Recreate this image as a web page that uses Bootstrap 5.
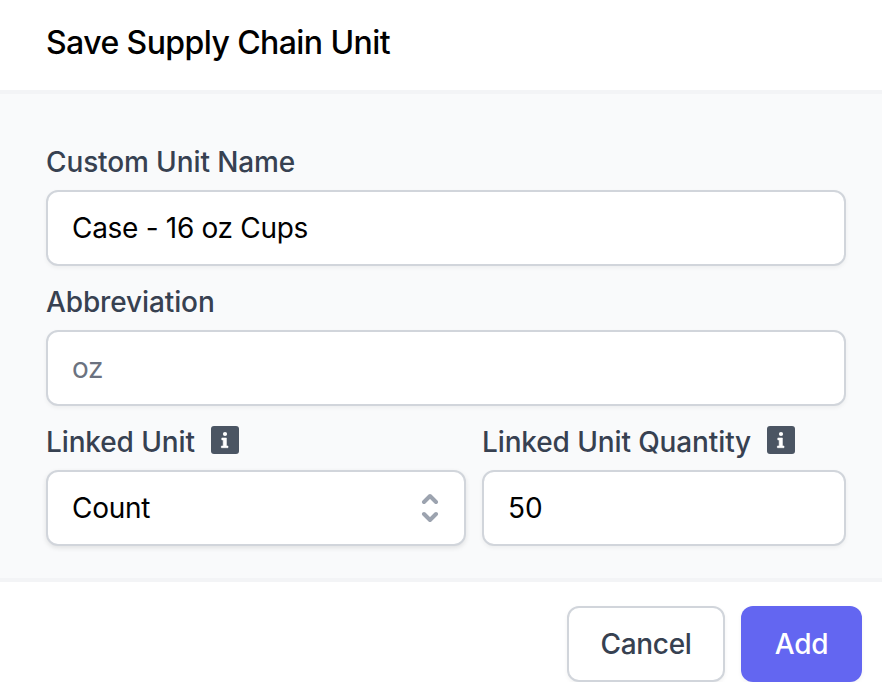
<!DOCTYPE html>
<html lang="en">
<head>
<meta charset="utf-8">
<meta name="viewport" content="width=device-width, initial-scale=1">
<title>Save Supply Chain Unit</title>
<link href="https://cdn.jsdelivr.net/npm/bootstrap@5.3.0/dist/css/bootstrap.min.css" rel="stylesheet">
<style>
body{font-family:Inter,"Liberation Sans",sans-serif;font-size:28px;line-height:40px;color:#000;background:#fff;overflow:hidden}
.unit-head{height:94px;padding:19px 46px 0;border-bottom:4px solid #f3f4f6}
.unit-title{font-size:32px;line-height:48px;font-weight:480;letter-spacing:-.58px}
.unit-body{height:488px;padding:48px 36px 0 46px;background:#f9fafb;border-bottom:4px solid #f3f4f6}
.unit-body .form-label{font-weight:480;letter-spacing:-.12px;color:#374151;height:40px;margin-bottom:8px;line-height:40px}
.unit-body .form-control,.unit-body .form-select{height:76px;border:2px solid #d1d5db;border-radius:12px;padding:16px 24px;font-size:28px;letter-spacing:-.3px;line-height:40px;color:#000;background-color:#fff;box-shadow:0 2px 4px rgba(0,0,0,.05)}
.unit-body .form-control::placeholder{color:#6b7280;opacity:1}
.unit-body .qty-input{letter-spacing:0}
.select-box .form-select{background-image:none;box-shadow:0 2px 5px rgba(0,0,0,.1)}
.select-box svg{right:24px;top:22px;pointer-events:none}
.linked-unit{width:420px}
.info-icon{margin-left:16px;margin-top:4px}
.unit-foot{padding:24px 20px 0}
.unit-foot .btn{height:76px;border-width:2px;border-radius:12px;font-size:28px;line-height:40px;font-weight:480;letter-spacing:-.3px;padding:0;box-shadow:0 2px 4px rgba(0,0,0,.05)}
.btn-cancel{width:158px;border-color:#d1d5db;color:#374151;background:#fff}
.btn-add{width:121px;background:#6366f1;color:#fff}
</style>
<script src="https://cdn.jsdelivr.net/npm/bootstrap@5.3.0/dist/js/bootstrap.bundle.min.js" defer></script>
</head>
<body>
<svg class="d-none">
  <symbol id="info" viewBox="0 0 28 28"><rect width="28" height="28" rx="3" fill="#4b5563"/><circle cx="14" cy="8" r="2.1" fill="#fff"/><path d="M10.8 12h4.6v8h1.6v1.7h-6.6V20h1.8v-6.1h-1.4z" fill="#fff" stroke="#fff" stroke-width=".6" stroke-linejoin="round"/></symbol>
</svg>
<header class="unit-head"><h1 class="unit-title m-0">Save Supply Chain Unit</h1></header>
<main class="unit-body">
  <div class="mb-3">
    <label class="form-label d-block" for="name">Custom Unit Name</label>
    <input class="form-control" id="name" type="text" value="Case - 16 oz Cups">
  </div>
  <div class="mb-3">
    <label class="form-label d-block" for="abbr">Abbreviation</label>
    <input class="form-control" id="abbr" type="text" placeholder="oz">
  </div>
  <div class="d-flex gap-3">
    <div class="linked-unit flex-shrink-0">
      <label class="form-label d-flex align-items-start" for="unit">Linked Unit<svg class="info-icon" width="28" height="28"><use href="#info"/></svg></label>
      <div class="select-box position-relative">
        <select class="form-select" id="unit"><option>Count</option></select>
        <svg class="position-absolute" width="24" height="32" viewBox="0 0 24 32" fill="none" stroke="#9ca3af" stroke-width="4" stroke-linecap="round" stroke-linejoin="round"><path d="M6 10l6-6 6 6M6 22l6 6 6-6"/></svg>
      </div>
    </div>
    <div class="flex-grow-1">
      <label class="form-label d-flex align-items-start" for="qty">Linked Unit Quantity<svg class="info-icon" width="28" height="28"><use href="#info"/></svg></label>
      <input class="form-control qty-input" id="qty" type="text" value="50">
    </div>
  </div>
</main>
<footer class="unit-foot d-flex justify-content-end gap-3">
  <button class="btn btn-cancel" type="button">Cancel</button>
  <button class="btn btn-add" type="button">Add</button>
</footer>
</body>
</html>
